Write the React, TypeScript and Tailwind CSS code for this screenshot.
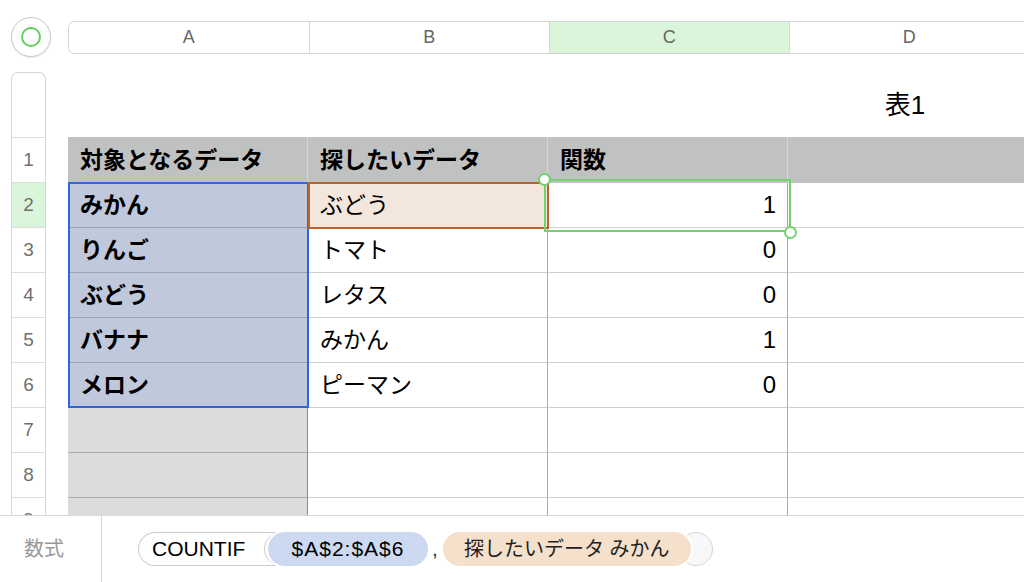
import React from 'react'

const font = { fontFamily: '"Liberation Sans", "Noto Sans CJK JP", sans-serif' }

const cols = ['A', 'B', 'C', 'D']
const rows = [
  { a: 'みかん', b: 'ぶどう', c: '1' },
  { a: 'りんご', b: 'トマト', c: '0' },
  { a: 'ぶどう', b: 'レタス', c: '0' },
  { a: 'バナナ', b: 'みかん', c: '1' },
  { a: 'メロン', b: 'ピーマン', c: '0' },
]

function ColumnBar() {
  return (
    <div className="flex items-center h-[40px] mt-[17px]">
      <div className="ml-[11px] w-[40px] h-[40px] rounded-full border border-[#c8c8c8] bg-white shadow-[0_1px_2px_rgba(0,0,0,0.08)] flex items-center justify-center">
        <div className="w-[20px] h-[20px] rounded-full border-2 border-[#62cf5c]" />
      </div>
      <div className="ml-[17px] flex h-[33px] border border-r-0 border-[#d3d3d3] rounded-l-[7px] overflow-hidden">
        {cols.map((c, i) => (
          <div
            key={c}
            className={
              'w-[240px] shrink-0 flex items-center justify-center text-[18px] text-[#666] ' +
              (i > 0 ? 'border-l border-[#d8d8d8] ' : '') +
              (c === 'C' ? 'bg-[#daf5da]' : 'bg-white')
            }
          >
            {c}
          </div>
        ))}
      </div>
    </div>
  )
}

function RowHeaders() {
  return (
    <div className="ml-[11px] w-[35px] shrink-0 border border-b-0 border-[#d6d6d6] rounded-t-[7px] bg-white">
      <div className="h-[65px] border-b border-[#dcdcdc]" />
      {[1, 2, 3, 4, 5, 6, 7, 8, 9].map(n => (
        <div
          key={n}
          className={
            'h-[45px] border-b border-[#dcdcdc] flex items-center justify-center text-[19px] text-[#707070] ' +
            (n === 2 ? 'bg-[#daf5da]' : '')
          }
        >
          {n}
        </div>
      ))}
    </div>
  )
}

function Table() {
  return (
    <div className="ml-[22px] flex flex-col">
      <div className="h-[65px] grid grid-cols-[240px_240px_240px_240px] items-center">
        <div className="col-start-4 text-center text-[26px] text-black pr-[6px] pt-[2px]">表1</div>
      </div>
      <div className="relative">
        <div className="grid grid-cols-[240px_240px_240px_240px] text-[23px] text-black">
          {['対象となるデータ', '探したいデータ', '関数', ''].map((h, i) => (
            <div
              key={i}
              className="h-[46px] bg-[#c0c1c1] border-r border-[#d6d6d6] flex items-center px-[12px] font-bold"
            >
              {h}
            </div>
          ))}
          {rows.map((r, i) => (
            <React.Fragment key={i}>
              <div className="h-[45px] bg-[#c0c8dc] border-b border-r border-[#9aa2b5] flex items-center px-[12px] font-bold">
                {r.a}
              </div>
              <div
                className={
                  'h-[45px] border-b border-r border-b-[#cfcfcf] border-r-[#a8a8a8] flex items-center px-[12px] ' +
                  (i === 0 ? 'bg-[#f3e6dd]' : 'bg-white')
                }
              >
                {r.b}
              </div>
              <div className="h-[45px] bg-white border-b border-r border-b-[#cfcfcf] border-r-[#a8a8a8] flex items-center justify-end px-[11px] text-[24px]">
                {r.c}
              </div>
              <div className="h-[45px] bg-white border-b border-[#cfcfcf]" />
            </React.Fragment>
          ))}
          {[7, 8, 9].map(n => (
            <React.Fragment key={n}>
              <div className="h-[45px] bg-[#dcdcdc] border-b border-r border-b-[#aaaaaa] border-r-[#8a8a8a]" />
              <div className="h-[45px] bg-white border-b border-r border-b-[#cfcfcf] border-r-[#a8a8a8]" />
              <div className="h-[45px] bg-white border-b border-r border-b-[#cfcfcf] border-r-[#a8a8a8]" />
              <div className="h-[45px] bg-white border-b border-[#cfcfcf]" />
            </React.Fragment>
          ))}
        </div>
        {/* A2:A6 range highlight */}
        <div className="absolute left-0 top-[45px] w-[241px] h-[226px] border-2 border-[#2f66dd] pointer-events-none" />
        {/* B2 reference highlight */}
        <div className="absolute left-[240px] top-[45px] w-[241px] h-[47px] border-2 border-[#ba642c] pointer-events-none" />
        {/* C2 selection */}
        <div className="absolute left-[476px] top-[42px] w-[247px] h-[53px] border-2 border-[#72d26c] pointer-events-none" />
        <div className="absolute left-[470px] top-[36px] w-[13px] h-[13px] rounded-full bg-white border-2 border-[#72d26c]" />
        <div className="absolute left-[716px] top-[89px] w-[13px] h-[13px] rounded-full bg-white border-2 border-[#72d26c]" />
      </div>
    </div>
  )
}

function FormulaBar() {
  return (
    <div className="h-[67px] shrink-0 border-t border-[#d8d8d8] bg-white flex items-stretch">
      <div className="w-[102px] border-r border-[#d8d8d8] flex items-center pl-[24px] text-[20px] text-[#9a9a9a]">
        数式
      </div>
      <div className="flex items-center pl-[36px] text-[21px] text-black">
        {/* function token, left part */}
        <div className="w-[143px] h-[34px] flex items-center pl-[13px] border border-r-0 border-[#cdcdcd] rounded-l-full bg-white">
          COUNTIF
        </div>
        <div className="w-[34px] h-[34px] -ml-[17px] rounded-full border border-[#cdcdcd] bg-white" />
        <div className="w-[160px] h-[34px] -ml-[30px] flex items-center justify-center tracking-[1px] rounded-full bg-[#cdd9f1] shadow-[0_0_0_2px_#ffffff] relative z-10">
          $A$2:$A$6
        </div>
        <span className="ml-[4px] mr-[5px] text-[#333]">,</span>
        <div className="w-[248px] h-[34px] flex items-center justify-center text-[20px] rounded-full bg-[#f5e0cb] text-[#222] shadow-[0_0_0_2px_#ffffff] relative z-10">
          探したいデータ みかん
        </div>
        {/* function token, closing part */}
        <div className="w-[34px] h-[34px] -ml-[12px] rounded-full border border-[#d4d4d4] bg-[#f8f8f8]" />
      </div>
    </div>
  )
}

export default function App() {
  return (
    <div className="w-[1024px] h-[582px] overflow-hidden bg-white flex flex-col" style={font}>
      <div className="h-[515px] shrink-0 overflow-hidden">
        <ColumnBar />
        <div className="flex mt-[15px]">
          <RowHeaders />
          <Table />
        </div>
      </div>
      <FormulaBar />
    </div>
  )
}
